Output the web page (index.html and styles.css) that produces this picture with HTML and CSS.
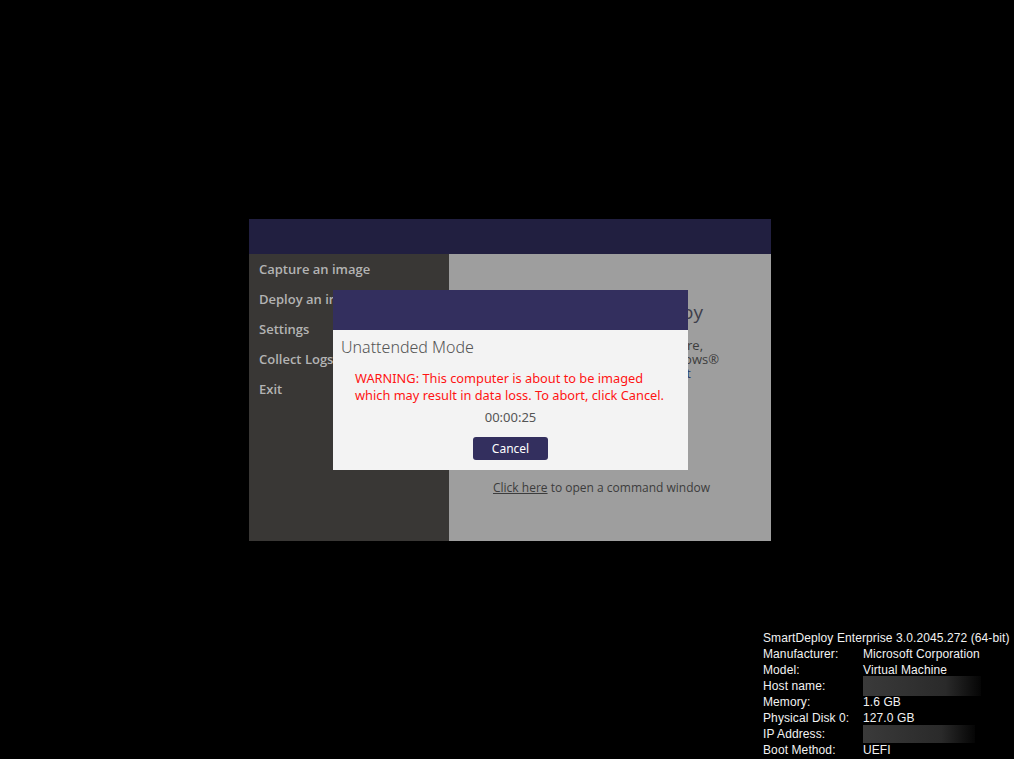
FILE: index.html
```html
<!DOCTYPE html>
<html lang="en">
<head>
  <meta charset="UTF-8" />
  <title>SmartDeploy</title>
  <link rel="stylesheet" href="styles.css">
</head>
<body>
  <div class="screen">

    <!-- App window -->
    <div class="app">
      <div class="app-header"></div>
      <div class="app-body">
        <ul class="menu">
          <li>Capture an image</li>
          <li>Deploy an image</li>
          <li>Settings</li>
          <li>Collect Logs</li>
          <li>Exit</li>
        </ul>
        <div class="main">
          <h2>Welcome to SmartDeploy</h2>
          <p class="intro">
            <span class="l1">Select a task to capture,</span>
            <span class="l2">or deploy Windows®</span>
            <span class="l3"><a href="#">Learn about it</a></span>
          </p>
          <p class="cmd"><a href="#">Click here</a> to open a command window</p>
        </div>
      </div>

      <!-- Unattended modal -->
      <div class="modal">
        <div class="modal-header"></div>
        <div class="modal-body">
          <h3>Unattended Mode</h3>
          <p class="warning">WARNING: This computer is about to be imaged<br>which may result in data loss. To abort, click Cancel.</p>
          <p class="timer">00:00:25</p>
          <button class="cancel">Cancel</button>
        </div>
      </div>
    </div>

    <!-- System info -->
    <div class="info">
      <div class="info-title">SmartDeploy Enterprise 3.0.2045.272 (64-bit)</div>
      <div class="row"><span>Manufacturer:</span><span>Microsoft Corporation</span></div>
      <div class="row"><span>Model:</span><span>Virtual Machine</span></div>
      <div class="row"><span>Host name:</span><span class="redacted host"></span></div>
      <div class="row"><span>Memory:</span><span>1.6 GB</span></div>
      <div class="row"><span>Physical Disk 0:</span><span>127.0 GB</span></div>
      <div class="row"><span>IP Address:</span><span class="redacted ip"></span></div>
      <div class="row"><span>Boot Method:</span><span>UEFI</span></div>
    </div>

  </div>
</body>
</html>
```

FILE: styles.css
```css
body {
  margin: 0;
  background: #000;
  font-family: "Open Sans", Arial, sans-serif;
}

.screen {
  width: 1014px;
  height: 759px;
  overflow: hidden;
  display: flex;
  flex-direction: column;
}

.app {
  position: relative;
  width: 522px;
  height: 322px;
  margin: 219px 0 0 249px;
}

.app-header {
  height: 35px;
  background: #211f40;
}

.app-body {
  display: flex;
  height: 287px;
}

.menu {
  list-style: none;
  margin: 0;
  padding: 0;
  width: 200px;
  background: #393735;
}

.menu li {
  height: 30px;
  line-height: 30px;
  padding-left: 10px;
  color: #b3b3b3;
  font-size: 13px;
  font-weight: 600;
  white-space: nowrap;
}

.main {
  flex: 1;
  background: #9e9e9e;
  color: #3c3c3c;
  white-space: nowrap;
}

.main h2 {
  margin: 44px 68px 0 0;
  text-align: right;
  font-size: 19px;
  font-weight: 400;
  line-height: 28px;
  color: #3e3e4c;
}

.intro {
  margin: 12px 0 0;
  text-align: right;
  font-size: 13px;
  line-height: 14px;
}

.intro span {
  display: block;
  padding-right: 52px;
}

.intro .l1 {
  padding-right: 68px;
}

.intro .l3 {
  padding-right: 80px;
}

.intro a {
  color: #293a6a;
  text-decoration: none;
}

.cmd {
  margin: 99px 0 0 44px;
  font-size: 12px;
  line-height: 18px;
}

.cmd a {
  color: #3c3c3c;
}

.modal {
  position: absolute;
  left: 84px;
  top: 71px;
  width: 355px;
  height: 180px;
  background: #f3f3f3;
}

.modal-header {
  height: 40px;
  background: #332f5e;
}

.modal-body {
  text-align: center;
}

.modal-body h3 {
  margin: 0;
  padding: 7px 0 0 8px;
  text-align: left;
  font-family: "Noto Sans", "Open Sans", sans-serif;
  font-size: 16px;
  font-weight: 300;
  line-height: 20px;
  color: #555;
}

.warning {
  margin: 13px 0 0;
  padding-left: 22px;
  text-align: left;
  font-family: "Noto Sans", sans-serif;
  font-size: 12.8px;
  line-height: 17px;
  color: #ff1414;
}

.timer {
  margin: 5px 0 0;
  font-family: "Noto Sans", sans-serif;
  font-size: 13px;
  line-height: 17px;
  color: #555;
}

.cancel {
  margin-top: 11px;
  width: 75px;
  height: 23px;
  border: none;
  border-radius: 3px;
  background: #332f5e;
  color: #fff;
  font-family: "Noto Sans", sans-serif;
  font-size: 12px;
  padding: 0;
}

.info {
  margin: 89px 0 0 763px;
  color: #f2f2f2;
  font-family: "Liberation Sans", Arial, sans-serif;
  font-size: 12px;
  letter-spacing: 0.1px;
  line-height: 16px;
  white-space: nowrap;
}

.row {
  display: flex;
}

.row span:first-child {
  width: 100px;
}

.redacted {
  display: inline-block;
  height: 20px;
  background: linear-gradient(to right, #3a3a3a, #2a2a2a 70%, #050505);
}

.redacted.host {
  width: 118px;
  margin-top: -2px;
  margin-bottom: -2px;
}

.redacted.ip {
  width: 112px;
  height: 18px;
  margin-top: -1px;
  margin-bottom: -1px;
}
```
